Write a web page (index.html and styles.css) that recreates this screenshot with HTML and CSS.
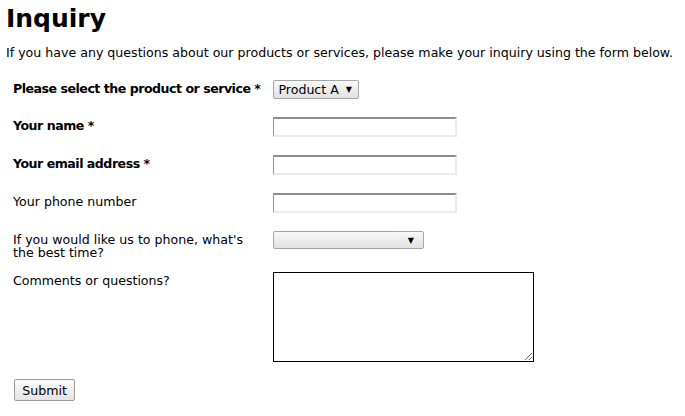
FILE: index.html
```html
<!DOCTYPE html>
<html lang="en">
<head>
    <meta charset="UTF-8">
    <title>Inquiry</title>
    <link rel="stylesheet" href="styles.css">
</head>
<body>
    <h1>Inquiry</h1>
    <p class="intro">If you have any questions about our products or services, please make your inquiry using the form below.</p>

    <form class="inquiry-form">
        <div class="row">
            <label class="req" for="product">Please select the product or service *</label>
            <div class="control"><span class="select small" id="product">Product A <span class="arrow">&#9660;</span></span></div>
        </div>
        <div class="row">
            <label class="req" for="name">Your name *</label>
            <div class="control"><input type="text" id="name"></div>
        </div>
        <div class="row">
            <label class="req" for="email">Your email address *</label>
            <div class="control"><input type="text" id="email"></div>
        </div>
        <div class="row">
            <label for="phone">Your phone number</label>
            <div class="control"><input type="text" id="phone"></div>
        </div>
        <div class="row two-line">
            <label for="time">If you would like us to phone, what's the best time?</label>
            <div class="control"><span class="select wide" id="time"><span class="arrow">&#9660;</span></span></div>
        </div>
        <div class="row">
            <label for="comments">Comments or questions?</label>
            <div class="control"><textarea id="comments"></textarea></div>
        </div>
        <div class="actions">
            <button type="button">Submit</button>
        </div>
    </form>
</body>
</html>
```
FILE: styles.css
```css
body {
    margin: 0;
    padding: 4px 6px;
    font-family: "DejaVu Sans", Verdana, sans-serif;
    font-size: 12.6px;
    color: #000;
    background: #fff;
}
h1 {
    font-size: 25px;
    margin: 0;
    line-height: 30px;
}
.intro {
    margin: 11px 0 0 0;
    line-height: 16px;
}
.inquiry-form {
    margin-top: 19px;
    padding-left: 7px;
}
.row {
    display: grid;
    grid-template-columns: 260px 1fr;
    margin-bottom: 18px;
}
.row.two-line {
    margin-bottom: 13px;
}
.row label {
    line-height: 13px;
    padding-top: 2px;
    padding-right: 12px;
}
.row label.req {
    font-weight: bold;
    letter-spacing: -0.5px;
    white-space: nowrap;
}
input[type="text"] {
    display: block;
    width: 184px;
    height: 20px;
    box-sizing: border-box;
    margin: 0;
    border-style: solid;
    border-color: #8c8c8c #ebebeb #ebebeb #9a9a9a;
    border-width: 2px 2px 2px 1px;
    background: #fff;
}
.select {
    display: flex;
    align-items: center;
    justify-content: flex-end;
    box-sizing: border-box;
    height: 18px;
    border: 1px solid #a6a6a6;
    border-radius: 2px;
    background: linear-gradient(#f8f8f8, #e2e2e2);
}
.select .arrow {
    font-size: 8px;
    margin-left: 7px;
}
.select.small {
    width: 86px;
    height: 19px;
    padding: 0 6px 0 4px;
}
.select.wide {
    width: 151px;
    padding-right: 9px;
}
textarea {
    display: block;
    width: 261px;
    height: 90px;
    box-sizing: border-box;
    border: 1px solid #000;
    margin: 0;
    resize: both;
}
.actions {
    margin-top: -1px;
}
button {
    font-family: "DejaVu Sans", Verdana, sans-serif;
    font-size: 12.6px;
    width: 61px;
    height: 22px;
    padding: 0;
    margin-left: 1px;
    border: 1px solid #9c9c9c;
    border-radius: 2px;
    background: linear-gradient(#fafafa, #e4e4e4);
    color: #000;
}
```
